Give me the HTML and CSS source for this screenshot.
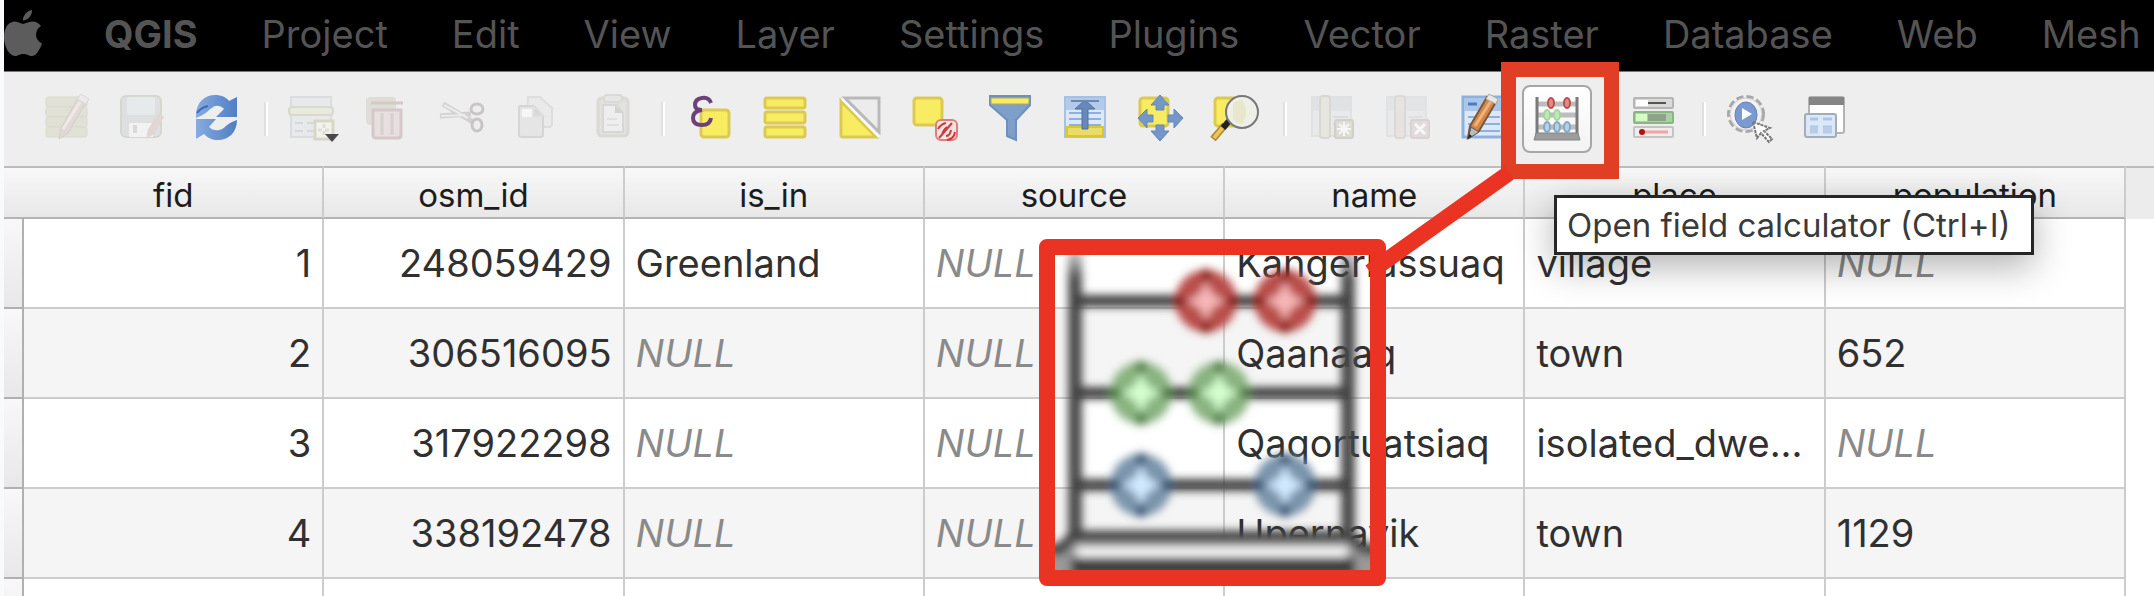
FILE: index.html
```html
<!DOCTYPE html>
<html lang="en">
<head>
<meta charset="utf-8">
<title>QGIS attribute table</title>
<link rel="stylesheet" href="styles.css">
</head>
<body>
<div class="window">
  <nav class="menubar" aria-label="Application menu">
    <button class="menu apple" aria-label="Apple menu"><svg width="38" height="47" viewBox="0 0 38 47"><path d="M28 0c.4 5-4 10.500-9 10.500C18.500 6 23 .8 28 0zM19 14c2 0 5-2.500 9.500-2.500 3.500 0 6.500 2 8.500 4.500-7 4-6.500 14.500 1 17.500-2 6-6 12.500-10 12.500-3.500 0-4.500-2-8.500-2s-5.500 2-8.500 2C5 46 0 36 0 27 0 17 5 11.500 11 11.500c3.500 0 6 2.500 8 2.500z"/></svg></button>
    <button class="menu app">QGIS</button>
    <button class="menu">Project</button>
    <button class="menu">Edit</button>
    <button class="menu">View</button>
    <button class="menu">Layer</button>
    <button class="menu">Settings</button>
    <button class="menu">Plugins</button>
    <button class="menu">Vector</button>
    <button class="menu">Raster</button>
    <button class="menu">Database</button>
    <button class="menu">Web</button>
    <button class="menu">Mesh</button>
  </nav>

  <div class="toolbar" role="toolbar" aria-label="Attribute table tools">
    <div class="group">
      <button class="tool" aria-label="Multi edit" disabled><svg class="icon" viewBox="0 0 48 48"><g fill="#e0dfd1" stroke="#d6d5c6"><rect x="4" y="2" width="41" height="10" rx="2"/><rect x="4" y="12" width="41" height="10" rx="2"/><rect x="4" y="22" width="41" height="10" rx="2"/><rect x="4" y="32" width="41" height="10" rx="2"/></g><path d="M17 44l2-11L37 1l8 5-19 32z" fill="#ddd5d1" stroke="#cbc6c3"/><path d="M35 4l4-5 8 5-3 5z" fill="#eceae9" stroke="#d5d2d0"/><path d="M21 34L38 7" stroke="#eee8e6" stroke-width="3"/></svg></button>
      <button class="tool" aria-label="Save edits" disabled><svg class="icon" viewBox="0 0 48 48"><rect x="4" y="1" width="40" height="41" rx="5" fill="#d9dcdd" stroke="#cfd2cb" stroke-width="2"/><rect x="10" y="2" width="28" height="18" rx="2" fill="#e6eaeb"/><path d="M12 42V28h24v14z" fill="#f3f3f3"/><path d="M18 30v8" stroke="#d4d4d4" stroke-width="4"/><path d="M29 44l2-10 11-16 5 4-10 17z" fill="#ddd2ce"/></svg></button>
      <button class="tool" aria-label="Reload the table"><svg class="icon" viewBox="0 0 48 48"><defs><linearGradient id="blue" x1="0" x2="1"><stop offset="0" stop-color="#86ace0"/><stop offset="1" stop-color="#4f7ec4"/></linearGradient></defs><path d="M4 20C4 7 13 0 23 0c6 0 11 2 14 6l8-4v20H24l8-8c-4-4-9-4-12-1-4 2-5 6-16 10z" fill="url(#blue)"/><path d="M45 25c0 13-9 20-19 20-6 0-10-2-14-6l-8 5V24h20l-7 8c4 4 9 4 13 2 4-2 5-6 15-9z" fill="url(#blue)"/><path d="M5 18c3-4 6-6 11-7" fill="none" stroke="#3f6cb0" stroke-width="2"/></svg></button>
    </div>
    <span class="separator"></span>
    <div class="group">
      <button class="tool" aria-label="Add feature" disabled><svg class="icon" viewBox="0 0 48 48"><rect x="2" y="2" width="40" height="40" fill="#e6e9ea" stroke="#d5dadd" stroke-width="2"/><path d="M6 28h30M6 36h30" stroke="#cfd3d6" stroke-width="2" stroke-dasharray="8 4"/><rect x="0" y="12" width="44" height="8" rx="3" fill="#e9e8da" stroke="#d5d4c3" stroke-width="2"/><rect x="26" y="26" width="18" height="18" fill="#f5f5ef" stroke="#d3d2bd" stroke-width="3"/><path d="M35 29v12M29 35h12" stroke="#dcdcd0" stroke-width="3" stroke-dasharray="4 3"/><path d="M36 39h14l-7 8z" fill="#222"/></svg></button>
      <button class="tool" aria-label="Delete selected features" disabled><svg class="icon" viewBox="0 0 48 48"><rect x="2" y="2" width="30" height="28" rx="4" fill="#dcdad1"/><path d="M7 8h32" stroke="#cfc0bf" stroke-width="3"/><path d="M9 15h28v25q0 3-3 3H12q-3 0-3-3z" fill="#e7dddd" stroke="#cfbfc0" stroke-width="3"/><path d="M18 18v22M28 18v22" stroke="#d5c8c8" stroke-width="3"/></svg></button>
      <button class="tool" aria-label="Cut" disabled><svg class="icon" viewBox="0 0 48 48" fill="none" stroke="#c2bcbc"><path d="M4 9l30 18M1 21l31-2" stroke="#cbcbcb" stroke-width="5"/><path d="M5 10l24 13M2 21l24-1" stroke="#ebebeb" stroke-width="2"/><ellipse cx="38" cy="14" rx="6" ry="5" stroke-width="3"/><ellipse cx="38" cy="30" rx="5" ry="6" stroke-width="3"/></svg></button>
      <button class="tool" aria-label="Copy" disabled><svg class="icon" viewBox="0 0 48 48" fill="#eaeaea" stroke="#d9d9d9" stroke-width="2"><path d="M14 2h12l12 11v16q0 3-3 3H16q-3 0-3-3z"/><path d="M7 11h13l9 10v19q0 2-3 2H8q-3 0-3-2V13q0-2 2-2z" fill="#e4e4e4" stroke="#cfcfcf"/><path d="M8 14h10v8H8z" fill="#f8f8f8" stroke="none"/><path d="M20 11v10h9z" fill="#d3d3d3"/></svg></button>
      <button class="tool" aria-label="Paste" disabled><svg class="icon" viewBox="0 0 48 48"><rect x="9" y="3" width="30" height="38" rx="4" fill="#e0dfdb" stroke="#d6d5cf" stroke-width="3"/><rect x="15" y="0" width="18" height="7" rx="3" fill="#e5e5e1" stroke="#d5d5cf" stroke-width="2"/><path d="M14 10h14l6 8v19H14z" fill="#eee" stroke="#d2d2d2" stroke-width="2"/><path d="M26 10v8h8z" fill="#ccc"/><path d="M18 24h10M18 30h12" stroke="#ddd" stroke-width="2"/></svg></button>
    </div>
    <span class="separator"></span>
    <div class="group">
      <button class="tool" aria-label="Select by expression"><svg class="icon" viewBox="0 0 48 48"><rect x="15" y="15" width="28" height="27" rx="3" fill="#f8ec62" stroke="#dcc951" stroke-width="3"/><path d="M25 8q-2-6-9-5-7 1-7 7 0 5 7 5-9 1-9 8t9 7q8 0 9-7" fill="none" stroke="#6a4278" stroke-width="4"/></svg></button>
      <button class="tool" aria-label="Select all"><svg class="icon" viewBox="0 0 48 48" fill="#f8ec62" stroke="#dcc951" stroke-width="3"><rect x="4" y="3" width="40" height="10" rx="2"/><rect x="4" y="17" width="40" height="11" rx="2"/><rect x="4" y="32" width="40" height="10" rx="2"/></svg></button>
      <button class="tool" aria-label="Invert selection"><svg class="icon" viewBox="0 0 48 48"><path d="M9 3h34v34z" fill="#ececec" stroke="#b9b9b9" stroke-width="3"/><path d="M5 6l35 36H7q-2 0-2-2z" fill="#f8ec62" stroke="#dcc951" stroke-width="3"/><path d="M6 4l37 38" stroke="#fff" stroke-width="2"/></svg></button>
      <button class="tool" aria-label="Deselect all"><svg class="icon" viewBox="0 0 48 48"><rect x="3" y="3" width="28" height="27" rx="3" fill="#f8ec62" stroke="#dcc951" stroke-width="3"/><rect x="25" y="25" width="21" height="20" rx="5" fill="#f6e3e3" stroke="#dc7f7f" stroke-width="2"/><path d="M28 43l13-15M27 34q3-5 8-6M31 40q1-5 5-8M35 41q4 0 5-6M36 45q7-1 8-8" stroke="#cc3a3a" stroke-width="2" fill="none"/></svg></button>
      <button class="tool" aria-label="Filter selection using form"><svg class="icon" viewBox="0 0 48 48"><path d="M4 1h40v9L30 25v20l-9-4V25L4 10z" fill="#7f9fcb" stroke="#6f8fbd" stroke-width="2"/><rect x="5" y="3" width="38" height="6" fill="#f8ec62" stroke="#a9a964"/></svg></button>
      <button class="tool" aria-label="Move selection to top"><svg class="icon" viewBox="0 0 48 48"><rect x="4" y="2" width="40" height="40" fill="#dbe8f7" stroke="#a6c1e4" stroke-width="2"/><path d="M5 3h38v12H5z" fill="#b3cbea"/><path d="M8 18h32M8 24h32M8 30h32" stroke="#90b0dc" stroke-width="2"/><rect x="6" y="32" width="36" height="9" fill="#e9dc68" stroke="#d9c72b" stroke-width="2"/><path d="M24 5l10 9h-7v20h-6V14h-7z" fill="#6688bd" stroke="#54709d"/><path d="M10 6h28" stroke="#7088ad" stroke-width="2"/></svg></button>
      <button class="tool" aria-label="Pan map to selected rows"><svg class="icon" viewBox="0 0 48 48"><rect x="4" y="3" width="28" height="28" rx="3" fill="#f8ec62" stroke="#dcc951" stroke-width="3"/><g fill="#7497ca" stroke="#6486b8"><path d="M24 0l9 10h-5v5h-8v-5h-5z"/><path d="M24 46l9-10h-5v-6h-8v6h-5z"/><path d="M2 23l9-9v6h6v7h-6v6z"/><path d="M47 23l-9-9v6h-6v7h6v6z"/></g></svg></button>
      <button class="tool" aria-label="Zoom map to selected rows"><svg class="icon" viewBox="0 0 48 48"><rect x="4" y="3" width="28" height="28" rx="3" fill="#f8ec62" stroke="#dcc951" stroke-width="3"/><path d="M2 44l12-14" stroke="#a7853d" stroke-width="7"/><path d="M3 43l10-12" stroke="#f1c54c" stroke-width="4"/><path d="M12 33l6-7" stroke="#222" stroke-width="6"/><circle cx="31" cy="17" r="16" fill="#eeefe7" stroke="#777" stroke-width="2"/><path d="M31 5q8 11 0 24-6-1-9-5V9q4-4 9-4z" fill="#e8e7cc"/></svg></button>
    </div>
    <span class="separator"></span>
    <div class="group">
      <button class="tool" aria-label="New field" disabled><svg class="icon" viewBox="0 0 48 48"><rect x="4" y="2" width="39" height="39" fill="#e7e9ea" stroke="#dcdfe1" stroke-width="2"/><path d="M5 3h37v13H5z" fill="#dde1e4"/><path d="M25 22h15M25 29h15" stroke="#d4d8dc" stroke-width="2"/><rect x="12" y="1" width="10" height="42" rx="3" fill="#e5e4dc" stroke="#d4d3c8" stroke-width="2"/><rect x="27" y="25" width="18" height="18" rx="2" fill="#d8d7cf" stroke="#cbcabf" stroke-width="2"/><path d="M36 27v14M29 34h14M31 29l10 10M41 29L31 39" stroke="#fafafa" stroke-width="2"/></svg></button>
      <button class="tool" aria-label="Delete field" disabled><svg class="icon" viewBox="0 0 48 48"><rect x="4" y="2" width="39" height="39" fill="#e7e8ea" stroke="#dfe0e2" stroke-width="2"/><path d="M5 3h37v13H5z" fill="#e0e2e5"/><path d="M25 22h15M25 29h15" stroke="#dadcdf" stroke-width="2"/><rect x="12" y="1" width="10" height="42" rx="3" fill="#e6e1e1" stroke="#d9d2d2" stroke-width="2"/><rect x="28" y="25" width="18" height="18" rx="2" fill="#dfd8d8" stroke="#d4cccc" stroke-width="2"/><path d="M32 29l10 10M42 29L32 39" stroke="#fafafa" stroke-width="3"/></svg></button>
      <button class="tool" aria-label="Organize columns"><svg class="icon" viewBox="0 0 48 48"><rect x="5" y="2" width="40" height="40" fill="#dce8f7" stroke="#8eb0de" stroke-width="3"/><path d="M6 3h38v13H6z" fill="#aac6e9"/><path d="M10 9h9" stroke="#4c7dc0" stroke-width="3"/><path d="M10 22h32M10 29h32M10 36h32" stroke="#8eb0de" stroke-width="2"/><path d="M10 43l2-12L29 2l9 5-17 29z" fill="#d58747" stroke="#7c5837" stroke-width="2"/><path d="M17 31L33 6" stroke="#eeb27d" stroke-width="3"/><path d="M28 4l3-5 9 5-2 5z" fill="#e8e8e4" stroke="#aaa"/><path d="M10 44l3-12 8 5z" fill="#bbb" stroke="#555"/><path d="M10 44l1-5 3 2z" fill="#222"/></svg></button>
      <button class="tool calculator" aria-label="Open field calculator" aria-describedby="tip"><svg class="icon" viewBox="0 0 48 48"><path d="M4 9h40M4 20h40M4 32h40" stroke="#bdbdbd" stroke-width="5"/><path d="M4 2v38M44 2v38" stroke="#7a7a7a" stroke-width="3"/><path d="M3 38h42l2 7H1z" fill="#9c9c9c" stroke="#858585"/><g stroke-width="2"><g fill="#e28b8b" stroke="#bd4d4d"><ellipse cx="18" cy="8" rx="3" ry="5"/><ellipse cx="34" cy="8" rx="3" ry="5"/></g><g fill="#bfe9b6" stroke="#a5d49c"><ellipse cx="14" cy="20" rx="3" ry="5"/><ellipse cx="24" cy="20" rx="3" ry="5"/></g><g fill="#b4d1ea" stroke="#86a6c2"><ellipse cx="14" cy="32" rx="3" ry="5"/><ellipse cx="24" cy="32" rx="3" ry="5"/><ellipse cx="34" cy="32" rx="3" ry="5"/></g></g></svg></button>
    </div>
    <span class="spacer"></span>
    <div class="group">
      <button class="tool" aria-label="Conditional formatting"><svg class="icon" viewBox="0 0 48 48"><rect x="4" y="3" width="39" height="10" rx="1" fill="#dadada" stroke="#b5b5b5" stroke-width="2"/><rect x="6" y="5" width="12" height="6" fill="#fff"/><path d="M18 8h18" stroke="#555" stroke-width="2"/><rect x="4" y="17" width="39" height="11" rx="1" fill="#a8d3a0" stroke="#89b681" stroke-width="2"/><rect x="6" y="19" width="11" height="7" fill="#d5fbc9"/><rect x="18" y="19" width="18" height="7" fill="#91a28c"/><rect x="4" y="32" width="39" height="10" rx="1" fill="#efecec" stroke="#c4c4c4" stroke-width="2"/><path d="M11 37h27" stroke="#f0a5a5" stroke-width="3"/><circle cx="12" cy="37" r="3" fill="#b90e0e"/></svg></button>
    </div>
    <span class="separator"></span>
    <div class="group">
      <button class="tool" aria-label="Actions"><svg class="icon" viewBox="0 0 48 48"><circle cx="19" cy="19" r="17" fill="#f1f1f1" stroke="#a8a8a8" stroke-width="4" stroke-dasharray="7 3"/><circle cx="19" cy="19" r="16" fill="#f1f1f1" stroke="#ccc"/><ellipse cx="19" cy="20" rx="11" ry="13" fill="#7b9bd0" stroke="#5f80b8"/><path d="M15 13l10 6-10 6z" fill="#fff"/><path d="M26 27l17 6-6 3 8 8-3 3-8-9-4 5z" fill="#fff" stroke="#777" stroke-width="2" stroke-dasharray="3 1"/></svg></button>
      <button class="tool" aria-label="Dock attribute table"><svg class="icon" viewBox="0 0 48 48"><rect x="7" y="2" width="35" height="36" rx="2" fill="#fff" stroke="#b3b3b3" stroke-width="2"/><path d="M7 2h35v8H7z" fill="#858585"/><rect x="3" y="19" width="31" height="23" rx="2" fill="#dce8f5" stroke="#a2adba" stroke-width="2"/><path d="M8 24h8M21 24h9M8 32h8M21 32h9" stroke="#a9c6e9" stroke-width="3"/><path d="M8 35h8M21 35h9" stroke="#b8cce8" stroke-width="7"/></svg></button>
    </div>
  </div>

  <table class="grid">
    <colgroup><col class="col-head"><col><col><col><col><col><col><col><col class="col-rest"></colgroup>
    <thead><tr><td class="corner"></td><th scope="col">fid</th><th scope="col">osm_id</th><th scope="col">is_in</th><th scope="col">source</th><th scope="col">name</th><th scope="col">place</th><th scope="col">population</th><td class="rest"></td></tr></thead>
    <tbody>
      <tr><td class="rowhead"></td><td class="num">1</td><td class="num">248059429</td><td>Greenland</td><td class="null">NULL</td><td>Kangerlussuaq</td><td>village</td><td class="null">NULL</td><td class="rest"></td></tr>
      <tr><td class="rowhead"></td><td class="num">2</td><td class="num">306516095</td><td class="null">NULL</td><td class="null">NULL</td><td>Qaanaaq</td><td>town</td><td>652</td><td class="rest"></td></tr>
      <tr><td class="rowhead"></td><td class="num">3</td><td class="num">317922298</td><td class="null">NULL</td><td class="null">NULL</td><td>Qaqortuatsiaq</td><td>isolated_dwe...</td><td class="null">NULL</td><td class="rest"></td></tr>
      <tr><td class="rowhead"></td><td class="num">4</td><td class="num">338192478</td><td class="null">NULL</td><td class="null">NULL</td><td>Upernavik</td><td>town</td><td>1129</td><td class="rest"></td></tr>
      <tr><td class="rowhead"></td><td></td><td></td><td></td><td></td><td></td><td></td><td></td><td class="rest"></td></tr>
    </tbody>
  </table>

  <div class="tooltip" id="tip" role="tooltip">Open field calculator (Ctrl+I)</div>
  <div class="highlight"></div>
  <div class="callout">
    <svg class="abacus" viewBox="0 0 315 315" aria-hidden="true">
      <defs>
        <filter id="soft" x="-20%" y="-20%" width="140%" height="140%"><feGaussianBlur stdDeviation="4"/></filter>
        <linearGradient id="post" gradientUnits="userSpaceOnUse" x1="0" y1="0" x2="0" y2="24"><stop offset="0" stop-color="#4a4a4a" stop-opacity=".35"/><stop offset="1" stop-color="#4a4a4a"/></linearGradient>
        <g id="bead"><circle r="31"/></g>
        <g id="tips"><circle cy="-26" r="6"/><circle cy="26" r="6"/><circle cx="-26" r="6"/><circle cx="26" r="6"/></g>
        <path id="shine" d="M0-20L5-9 9-5 20 0 9 5 5 9 0 20-5 9-9 5-20 0-9-5-5-9z"/>
      </defs>
      <g filter="url(#soft)">
        <path d="M13-8h14v290H13zM286-8h14v290h-14z" fill="url(#post)"/>
        <path d="M20 46h273M20 138h273M20 230h273" stroke="#404040" stroke-width="12"/>
        <path d="M-10 294H6L20 282h273l14 12h20v40H-10z" fill="#999"/>
        <path d="M-10 294H6L18 281H295l14 13h20" fill="none" stroke="#404040" stroke-width="11"/>
        <path d="M22 297h270" stroke="#fff" stroke-width="9"/>
        <path d="M16 312h284" stroke="#404040" stroke-width="19"/>
        <g fill="#b94e49"><use href="#bead" x="151" y="46"/><use href="#bead" x="230" y="46"/></g>
        <g fill="#89b480"><use href="#bead" x="86" y="138"/><use href="#bead" x="164" y="138"/></g>
        <g fill="#7a94ac"><use href="#bead" x="86" y="230"/><use href="#bead" x="230" y="230"/></g>
        <g fill="#860a06"><use href="#tips" x="151" y="46"/><use href="#tips" x="230" y="46"/></g>
        <g fill="#44743b"><use href="#tips" x="86" y="138"/><use href="#tips" x="164" y="138"/></g>
        <g fill="#2c4c6c"><use href="#tips" x="86" y="230"/><use href="#tips" x="230" y="230"/></g>
        <g fill="#f6b8b8"><use href="#shine" x="151" y="46"/><use href="#shine" x="230" y="46"/></g>
        <g fill="#d6ffcf"><use href="#shine" x="86" y="138"/><use href="#shine" x="164" y="138"/></g>
        <g fill="#d2eaff"><use href="#shine" x="86" y="230"/><use href="#shine" x="230" y="230"/></g>
      </g>
    </svg>
  </div>
  <svg class="connector" viewBox="0 0 160 120" aria-hidden="true"><path d="M10 112L149 13" stroke="#ea3323" stroke-width="16"/></svg>
</div>
</body>
</html>
```
FILE: styles.css
```css
* { box-sizing: border-box; }

body {
  margin: 0;
  background: #f8fafd;
  font-family: Inter, "Liberation Sans", sans-serif;
  color: #303030;
}

button {
  margin: 0;
  padding: 0;
  border: 0;
  background: none;
  font: inherit;
  color: inherit;
}

.window {
  position: relative;
  height: 100vh;
  padding-left: 4px;
  overflow: hidden;
}

/* Menu bar */
.menubar {
  display: flex;
  align-items: center;
  gap: 64px;
  height: 72px;
  padding-bottom: 4px;
  border-bottom: 1px solid #777;
  background: #000;
  color: #545454;
  font-size: 38px;
  line-height: 48px;
  white-space: nowrap;
}

.menu { flex: none; }
.apple { width: 36px; height: 47px; }
.apple svg { display: block; fill: #5c5c5c; }
.app { font-weight: 700; }

/* Toolbar */
.toolbar {
  display: flex;
  align-items: center;
  height: 94px;
  padding-left: 24px;
  background: #eee;
}

.group {
  display: flex;
  align-items: center;
}

.tool {
  display: grid;
  place-items: center;
  flex: none;
  width: 75px;
  height: 68px;
}

.tool:disabled { opacity: .8; }

.icon {
  display: block;
  width: 48px;
  height: 48px;
  overflow: visible;
}

.separator {
  flex: none;
  width: 4px;
  height: 34px;
  margin: 0 7px 0 11px;
  border-left: 2px solid #e0e0e0;
  background: #fff;
}

.spacer { flex: none; width: 22px; }

.calculator {
  width: 70px;
  margin: 0 2px 0 3px;
  border: 2px solid #a6a6a6;
  border-radius: 8px;
  background: linear-gradient(#fff, #f3f3f3);
}

/* Attribute grid */
.grid {
  width: 100%;
  table-layout: fixed;
  border-collapse: separate;
  border-spacing: 0;
  background: #fff;
  font-size: 38px;
  line-height: 48px;
}

.col-head { width: 20px; }
.col-rest { width: 28px; }

.grid thead th,
.grid thead td {
  height: 53px;
  padding: 4px 0 0;
  border-top: 2px solid #bcbcbc;
  border-bottom: 2px solid #b4b4b4;
  border-right: 2px solid #ccc;
  background: linear-gradient(#f8f8f8, #e8e8e8);
  color: #1c1c1c;
  font-size: 33px;
  font-weight: 400;
  line-height: 44px;
}

.grid thead .corner { border-right: 0; }
.grid thead .rest { border-right: 0; border-bottom-color: #ececec; background: #ececec; }

.grid tbody td {
  height: 90px;
  padding: 0 11px;
  border-right: 2px solid #ccc;
  border-bottom: 2px solid #ccc;
  white-space: nowrap;
}

.grid tbody tr:nth-child(even) td { background: #f5f5f5; }
.grid tbody .num { text-align: right; }
.grid tbody .null { color: #8a8a8a; font-style: italic; }

.grid tbody tr .rowhead,
.grid tbody tr:nth-child(even) .rowhead {
  padding: 0;
  border-color: #b0b0b0;
  background: linear-gradient(#f8f8f8, #e8e8e8);
}

.grid tbody tr .rest,
.grid tbody tr:nth-child(even) .rest {
  padding: 0;
  border: 0;
  background: #fff;
}

/* Overlays */
.tooltip {
  position: absolute;
  top: 195px;
  left: 1554px;
  padding: 6px 20px 6px 10px;
  border: 3px solid #262626;
  background: #fff;
  box-shadow: 0 12px 36px rgba(0, 0, 0, .3);
  color: #3a3a3a;
  font-size: 33px;
  line-height: 42px;
  white-space: nowrap;
}

.highlight {
  position: absolute;
  top: 62px;
  left: 1501px;
  width: 118px;
  height: 117px;
  border: 15px solid #e03e25;
}

.callout {
  position: absolute;
  top: 239px;
  left: 1039px;
  width: 347px;
  height: 347px;
  border: 16px solid #ea3323;
  border-radius: 8px;
}

.abacus {
  display: block;
  width: 100%;
  height: 100%;
  overflow: hidden;
}

.connector {
  position: absolute;
  top: 160px;
  left: 1360px;
  width: 160px;
  height: 120px;
}
```
